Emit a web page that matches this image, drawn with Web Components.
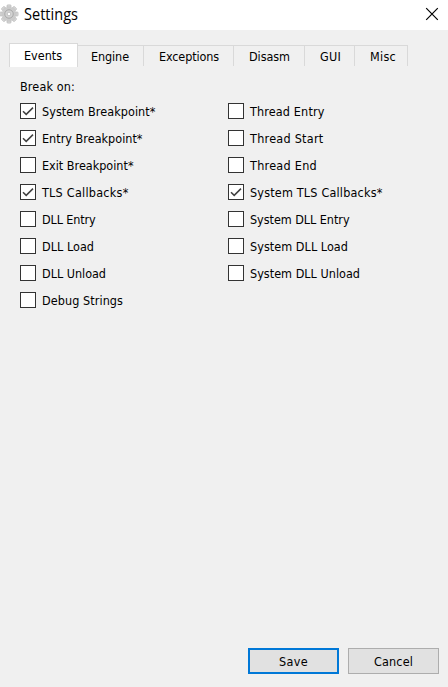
<!DOCTYPE html>
<html lang="en"><head><meta charset="utf-8"><title>Settings</title>
<style>html,body{margin:0;height:100%;overflow:hidden}</style></head>
<body>
<settings-window></settings-window>
<script>
const define = (name, html, setup) => {
  const t = document.createElement('template');
  t.innerHTML = html;
  customElements.define(name, class extends HTMLElement {
    connectedCallback() {
      if (this.shadowRoot) return;
      this.attachShadow({mode: 'open'}).append(t.content.cloneNode(true));
      if (setup) setup(this, this.shadowRoot);
    }
  });
};

/* Text run whose tracking (or horizontal scale, with "squeeze") is adjusted to a given width */
define('fit-text', `<style>:host{display:inline-block;white-space:pre}span{display:inline-block;transform-origin:0 50%}</style><span></span>`, (el, root) => {
  const s = root.querySelector('span');
  s.textContent = el.getAttribute('text');
  const w = +el.getAttribute('w');
  const cur = s.getBoundingClientRect().width;
  if (el.hasAttribute('squeeze')) s.style.transform = `scaleX(${w / cur})`;
  else s.style.letterSpacing = ((w - cur) / s.textContent.length) + 'px';
  el.style.width = w + 'px';
});

define('gear-icon', `<style>:host{display:block;width:19px;height:20px}svg{display:block}</style>
<svg width="19" height="20" viewBox="0 0 19 20">
<defs><linearGradient id="g" x2="0" y2="1"><stop stop-color="#dadada"/><stop offset="1" stop-color="#b4b4b4"/></linearGradient></defs>
<g fill="url(#g)" stroke="#b5b5b5" stroke-width=".5"><g id="teeth"></g></g>
<circle cx="9" cy="10" r="7" fill="#cbcbcb"/><circle cx="9" cy="10" r="4.3" fill="#c6c6c6" stroke="#adadad" stroke-width="1"/>
<circle cx="9" cy="10" r="3.3" fill="#d5d5d5"/><circle cx="9" cy="10" r="1.8" fill="#fff" stroke="#b0b0b0" stroke-width=".7"/></svg>`, (el, root) => {
  const g = root.querySelector('#teeth');
  for (let i = 0; i < 8; i++) {
    const r = document.createElementNS('http://www.w3.org/2000/svg', 'rect');
    for (const [k, v] of Object.entries({x: 6.9, y: .8, width: 4.2, height: 5, rx: 1, transform: `rotate(${i * 45} 9 10)`})) r.setAttribute(k, v);
    g.append(r);
  }
});

define('title-bar', `<style>
:host{display:flex;height:30px;background:#fff;box-sizing:border-box;align-items:center;font:15.5px/20px "Open Sans","Noto Sans",sans-serif;color:#000}
gear-icon{margin-top:-2px}fit-text{margin-left:4.6px;margin-top:-2px}
.x{margin-left:auto;margin-right:9px;margin-top:-2px;display:block}
</style><gear-icon></gear-icon><fit-text squeeze text="Settings" w="54"></fit-text>
<svg class="x" width="14" height="14" viewBox="0 0 14 14"><path d="M1.2 1.2 12.8 12.8M12.8 1.2 1.2 12.8" stroke="#000" stroke-width="1.2"/></svg>`);

define('tab-item', `<style>
:host{display:block;box-sizing:border-box;height:21px;margin-top:2px;border-top:1px solid #d9d9d9;border-right:1px solid #d9d9d9;padding-top:3px;line-height:16px}
:host([active]){height:24px;margin-top:0;background:#fff;border-left:1px solid #d9d9d9;padding-top:4px}
</style><slot></slot>`, el => {
  el.style.width = el.getAttribute('width') + 'px';
  el.style.paddingLeft = el.getAttribute('pad') + 'px';
});
define('tab-strip', `<style>:host{display:flex;align-items:flex-start;height:24px;padding:13px 0 0 9px}</style><slot></slot>`);

define('check-box', `<style>
:host{display:flex;height:27px;align-items:center;gap:6px}
.b{box-sizing:border-box;width:16px;height:16px;border:1px solid #333;background:#fff}
svg{display:none}:host([checked]) svg{display:block}
fit-text{line-height:16px;margin-top:2px}
</style><div class="b"><svg width="14" height="14" viewBox="0 0 14 14"><path d="M2 7.2 5.2 10.4 12 3.6" fill="none" stroke="#404040" stroke-width="1.5"/></svg></div><fit-text></fit-text>`, (el, root) => {
  const old = root.querySelector('fit-text'), f = document.createElement('fit-text');
  f.setAttribute('text', el.getAttribute('label'));
  f.setAttribute('w', el.getAttribute('w'));
  old.replaceWith(f);
});

define('push-button', `<style>
:host{display:flex;box-sizing:border-box;width:91px;height:26px;border:1px solid #adadad;background:#e1e1e1;align-items:center;justify-content:center;line-height:16px}
:host([default]){border:2px solid #0078d7}
::slotted(fit-text){margin-top:2px}
</style><slot></slot>`);

define('settings-window', `<style>
:host{display:flex;flex-direction:column;width:448px;height:687px;background:#f0f0f0;color:#000;font:12.5px/16px "DejaVu Sans Condensed","DejaVu Sans",sans-serif;font-stretch:condensed}
.h{padding:12px 0 0 20px;height:18px}
.cols{display:grid;grid-template-columns:208px 1fr;padding-left:20px}
.f{display:flex;gap:9px;justify-content:flex-end;margin-top:auto;padding:0 9px 13px 0}
</style>
<title-bar></title-bar>
<tab-strip>
<tab-item active width="69" pad="14"><fit-text text="Events" w="38"></fit-text></tab-item>
<tab-item width="66" pad="13"><fit-text text="Engine" w="38"></fit-text></tab-item>
<tab-item width="90" pad="15"><fit-text text="Exceptions" w="60"></fit-text></tab-item>
<tab-item width="71" pad="15"><fit-text text="Disasm" w="41"></fit-text></tab-item>
<tab-item width="50" pad="15"><fit-text text="GUI" w="21"></fit-text></tab-item>
<tab-item width="53" pad="15"><fit-text text="Misc" w="26"></fit-text></tab-item>
</tab-strip>
<div class="h"><fit-text text="Break on:" w="55"></fit-text></div>
<div class="cols"><div>
<check-box checked label="System Breakpoint*" w="113.5"></check-box>
<check-box checked label="Entry Breakpoint*" w="100.5"></check-box>
<check-box label="Exit Breakpoint*" w="91.5"></check-box>
<check-box checked label="TLS Callbacks*" w="86.5"></check-box>
<check-box label="DLL Entry" w="53.5"></check-box>
<check-box label="DLL Load" w="52"></check-box>
<check-box label="DLL Unload" w="64"></check-box>
<check-box label="Debug Strings" w="81"></check-box>
</div><div>
<check-box label="Thread Entry" w="74.5"></check-box>
<check-box label="Thread Start" w="73.5"></check-box>
<check-box label="Thread End" w="67"></check-box>
<check-box checked label="System TLS Callbacks*" w="132.5"></check-box>
<check-box label="System DLL Entry" w="99.5"></check-box>
<check-box label="System DLL Load" w="98"></check-box>
<check-box label="System DLL Unload" w="110"></check-box>
</div></div>
<div class="f"><push-button default><fit-text text="Save" w="29"></fit-text></push-button><push-button><fit-text text="Cancel" w="39"></fit-text></push-button></div>`);
</script>
</body></html>
